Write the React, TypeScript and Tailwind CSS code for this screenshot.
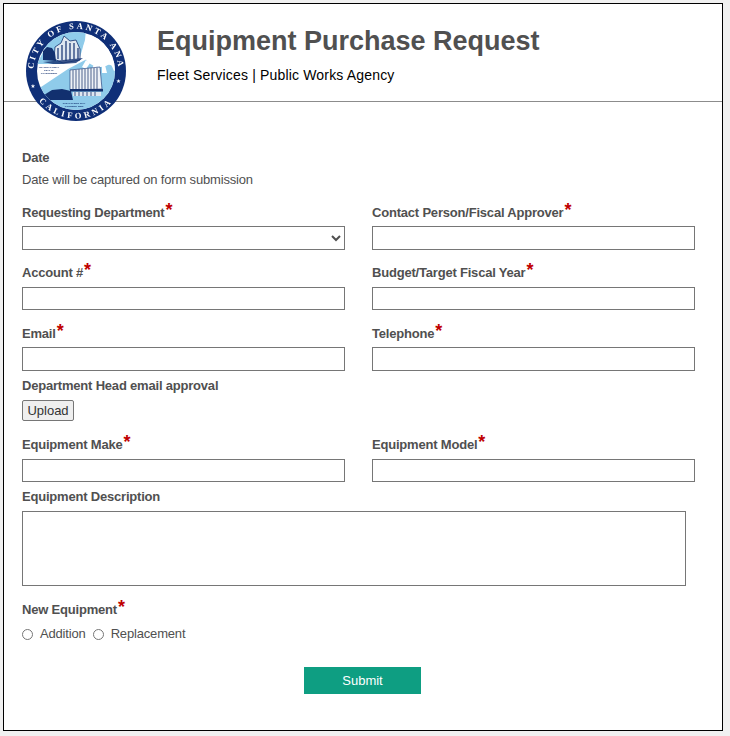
import React from "react";

const Star = () => (
  <span className="relative top-[-1px] ml-px text-[18px] leading-none text-[#c00000]">*</span>
);

const Label = ({ text, required }: { text: string; required?: boolean }) => (
  <label className="flex h-[20px] items-end text-[13px] font-bold leading-[14px] tracking-[-0.2px] text-[#505050]">
    <span>{text}</span>
    {required && <Star />}
  </label>
);

const inputClass = "block w-full border border-[#767676] bg-white";

const Field = ({ label, compact }: { label: string; compact?: boolean }) => (
  <div className="w-[323px]">
    <Label text={label} required />
    <input type="text" className={`${inputClass} ${compact ? "mt-[7px] h-[23px]" : "mt-[6px] h-[24px]"}`} />
  </div>
);

// drawn seal of the city
const Seal = () => (
  <svg viewBox="0 0 100 100" className="h-[100px] w-[100px] blur-[0.3px]">
    <defs>
      <path id="sealTop" d="M 8.1 57.4 A 42.5 42.5 0 1 1 91.9 57.4" />
      <path id="sealBottom" d="M 2.5 50 A 47.5 47.5 0 0 0 97.5 50" />
      <clipPath id="sealInner">
        <circle cx="50" cy="50" r="39" />
      </clipPath>
    </defs>
    <circle cx="50" cy="50" r="50" fill="#0f2f78" />
    <circle cx="50" cy="50" r="39" fill="#ffffff" />
    <g clipPath="url(#sealInner)">
      {/* sky and lower band */}
      <polygon points="11,43 21,23 40,8 60,8 59,19 54,36 34,43" fill="#8fcbea" />
      <polygon points="12,68 42,48 61,38 92,46 92,92 12,92" fill="#8fcbea" />
      {/* sun and rays */}
      <circle cx="74" cy="29" r="17" fill="#ffffff" />
      <polygon points="60,39 64,42 60,48 56,46" fill="#ffffff" />
      <polygon points="68,43 71,44 69,52 65,51" fill="#ffffff" />
      <polygon points="76,44 79,44 81,52 76,52" fill="#ffffff" />
      <polygon points="84,41 87,39 93,48 88,50" fill="#ffffff" />
      {/* house */}
      <polygon points="29,26 35,22 38,15 44,20 50,19 54,28 54,39 37,42 28,38" fill="#dfe7f0" stroke="#12306f" strokeWidth="0.8" />
      <path d="M32 27v11M36 24v15M40 20v20M44 22v17M48 22v16M52 27v11" stroke="#12306f" strokeWidth="1.2" />
      <path d="M17 30l4-4 5 1 3 5 1 8-13-1z" fill="#12306f" />
      <path d="M17 41l40-4-7 5-14 1-9 0z" fill="#12306f" opacity="0.8" />
      {/* small lines on the white band */}
      <text x="23" y="46.5" fontSize="2.3" fontWeight="700" fill="#12306f" textAnchor="middle" fontFamily="'Liberation Sans', sans-serif">ORANGE COUNTY</text>
      <text x="23" y="49.5" fontSize="2.3" fontWeight="700" fill="#12306f" textAnchor="middle" fontFamily="'Liberation Sans', sans-serif">SEAT OF</text>
      <text x="23" y="52.5" fontSize="2.3" fontWeight="700" fill="#12306f" textAnchor="middle" fontFamily="'Liberation Sans', sans-serif">GOVERNMENT</text>
      {/* tower */}
      <polygon points="44,49 74,46 76,68 44,69" fill="#eef2f7" stroke="#12306f" strokeWidth="0.6" />
      <path d="M47 49v19M50 49v19M53 48v20M56 48v20M59 48v20M62 47v21M65 47v21M68 47v21M71 47v21" stroke="#5c6f96" strokeWidth="1.1" />
      <rect x="44" y="68" width="33" height="2.5" fill="#12306f" />
      <rect x="47" y="71" width="28" height="4" fill="#dfe7f0" />
      <path d="M49 71v4M53 71v4M57 71v4M61 71v4M65 71v4M69 71v4" stroke="#12306f" strokeWidth="0.8" />
      {/* low building */}
      <path d="M18 74l8-5 10-1 9 2 2 9H22z" fill="#12306f" />
      <text x="48" y="82.5" fontSize="2.5" fontWeight="700" fill="#12306f" textAnchor="middle" fontFamily="'Liberation Sans', sans-serif">THE GOLDEN CITY</text>
      <text x="48" y="86" fontSize="2.5" fontWeight="700" fill="#12306f" textAnchor="middle" fontFamily="'Liberation Sans', sans-serif">FOUNDED 1869</text>
    </g>
    <text fill="#ffffff" fontFamily="'Liberation Serif', serif" fontWeight="700" fontSize="8.5" letterSpacing="2.6" textAnchor="middle">
      <textPath href="#sealTop" startOffset="50%">CITY OF SANTA ANA</textPath>
    </text>
    <text fill="#ffffff" fontFamily="'Liberation Serif', serif" fontWeight="700" fontSize="8.5" letterSpacing="3" textAnchor="middle">
      <textPath href="#sealBottom" startOffset="50%">CALIFORNIA</textPath>
    </text>
    <text x="4.5" y="67" fill="#ffffff" fontSize="5.5" fontFamily="'DejaVu Sans', sans-serif">★</text>
    <text x="90" y="62" fill="#ffffff" fontSize="5.5" fontFamily="'DejaVu Sans', sans-serif">★</text>
  </svg>
);

export default function App() {
  return (
    <div className="min-h-[736px] bg-[#f0f0f0] pl-[3px] pr-[7px] pt-[3px] font-['Liberation_Sans',Arial,sans-serif]">
      <div className="relative h-[728px] w-[720px] border border-black bg-white">
        {/* Header */}
        <div className="h-[98px] border-b border-[#8c8c8c] pl-[153px] pt-[19px]">
          <h1 className="text-[27px] font-bold leading-[36px] text-[#505050]">Equipment Purchase Request</h1>
          <p className="mt-[6px] text-[14px] leading-[20px] tracking-[0.17px] text-black">Fleet Services | Public Works Agency</p>
        </div>
        <div className="absolute left-[22px] top-[17px]">
          <Seal />
        </div>

        {/* Form */}
        <form className="pl-[18px] pt-[48px]">
          <div className="text-[13px] font-bold leading-[16px] tracking-[-0.2px] text-[#505050]">Date</div>
          <div className="mt-[6px] text-[13px] leading-[16px] tracking-[-0.17px] text-[#505050]">Date will be captured on form submission</div>

          <div className="mt-[12px] flex gap-[27px]">
            <div className="w-[323px]">
              <Label text="Requesting Department" required />
              <select className={`${inputClass} mt-[6px] h-[24px] text-[#505050]`} />
            </div>
            <Field label="Contact Person/Fiscal Approver" />
          </div>

          <div className="mt-[10px] flex gap-[27px]">
            <Field label="Account #" compact />
            <Field label="Budget/Target Fiscal Year" compact />
          </div>

          <div className="mt-[11px] flex gap-[27px]">
            <Field label="Email" />
            <Field label="Telephone" />
          </div>

          <div className="mt-[2px]">
            <Label text="Department Head email approval" />
            <button type="button" className="mt-[7px] block h-[21px] w-[52px] rounded-[2px] border border-[#767676] bg-[#efefef] text-[13px] leading-none text-[#333333]">
              Upload
            </button>
          </div>

          <div className="mt-[11px] flex gap-[27px]">
            <Field label="Equipment Make" compact />
            <Field label="Equipment Model" compact />
          </div>

          <div className="mt-[2px]">
            <Label text="Equipment Description" />
            <textarea className="mt-[7px] block h-[75px] w-[664px] resize-none border border-[#767676] bg-white" />
          </div>

          <div className="mt-[11px]">
            <Label text="New Equipment" required />
            <div className="mt-[9px] flex items-center text-[13px] leading-[16px] tracking-[-0.17px] text-[#505050]">
              <input type="radio" name="newEquipment" className="m-0 h-[11px] w-[11px]" />
              <span className="ml-[7px]">Addition</span>
              <input type="radio" name="newEquipment" className="m-0 ml-[7px] h-[11px] w-[11px]" />
              <span className="ml-[7px]">Replacement</span>
            </div>
          </div>

          <button type="button" className="ml-[282px] mt-[25px] block h-[27px] w-[117px] bg-[#0e9e82] text-[13px] text-white">
            Submit
          </button>
        </form>
      </div>
    </div>
  );
}
